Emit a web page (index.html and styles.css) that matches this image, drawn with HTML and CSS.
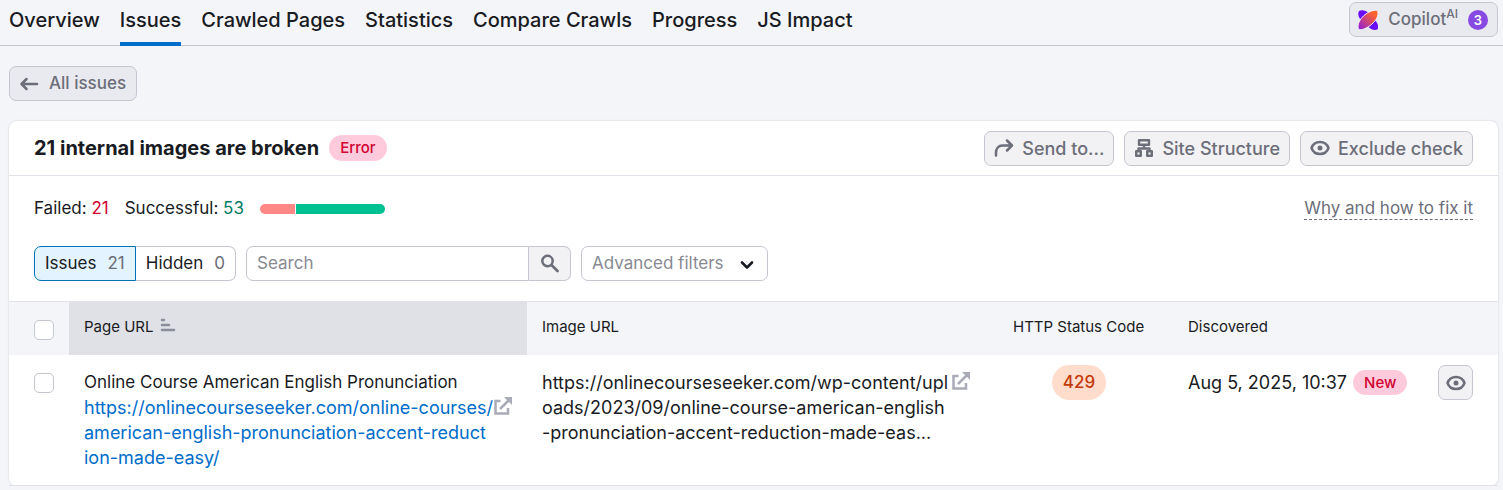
FILE: index.html
```html
<!DOCTYPE html>
<html lang="en">
<head>
<meta charset="utf-8">
<title>Site Audit: Issues</title>
<link rel="stylesheet" href="styles.css">
</head>
<body>
<svg class="sprite" aria-hidden="true">
  <symbol id="eye" viewBox="0 0 20 20">
    <path d="M1.500 10C3 5.800 6.300 4 10 4s7 1.800 8.500 6c-1.500 4.200-4.800 6-8.500 6s-7-1.800-8.500-6Z" fill="none" stroke="currentColor" stroke-width="2.500" stroke-linejoin="round"/>
    <circle cx="10" cy="10" r="2.500" fill="currentColor"/>
  </symbol>
  <symbol id="external" viewBox="0 0 20 20">
    <path d="M7.500 5H2.500v12.500H15v-5.500" fill="none" stroke="currentColor" stroke-width="2.500"/>
    <path d="M7 13 16 4" fill="none" stroke="currentColor" stroke-width="2.500"/>
    <path d="M11 1h8v8l-2.700-2.700-2.600-2.600Z" fill="currentColor"/>
  </symbol>
</svg>
<header class="topbar">
  <nav class="tabs">
    <a class="tab" href="#overview">Overview</a>
    <a class="tab tab-active" href="#issues" aria-current="page">Issues</a>
    <a class="tab" href="#pages">Crawled Pages</a>
    <a class="tab" href="#statistics">Statistics</a>
    <a class="tab" href="#compare">Compare Crawls</a>
    <a class="tab" href="#progress">Progress</a>
    <a class="tab" href="#js">JS Impact</a>
  </nav>
  <button class="btn btn-tinted copilot" type="button">
    <svg class="icon" viewBox="0 0 20 20" aria-hidden="true">
      <defs>
        <linearGradient id="flame" x1="1" y1="0" x2="0" y2="1">
          <stop offset="0.200" stop-color="#ff642d"/>
          <stop offset="1" stop-color="#8b1be0"/>
        </linearGradient>
      </defs>
      <path d="M1 1C4-.5 8 .5 11 3.500l6 6.500c3 3.500 3.800 6.500 2.500 9.500-3 1.200-7 .2-10.500-4L3 10C0 6.500-.3 3.500 1 1Z" fill="#6a0dff"/>
      <path d="M19.500.5c1.300 3.500.3 7.500-4 12S4.500 20.800.5 19.500C-.8 15.500.5 11.500 4.500 7S15.500-.8 19.500.5Z" fill="url(#flame)" stroke="#f0effa" stroke-width="1"/>
    </svg>
    <span class="copilot-name">Copilot<sup>AI</sup></span>
    <span class="counter">3</span>
  </button>
</header>

<main class="page">
  <button class="btn btn-tinted" type="button">
    <svg class="icon" viewBox="0 0 20 20" aria-hidden="true"><path d="M18 10H3M7.500 5 2.500 10l5 5" fill="none" stroke="currentColor" stroke-width="2.500" stroke-linecap="round" stroke-linejoin="round"/></svg>
    All issues
  </button>

  <section class="card">
    <div class="card-head">
      <h1 class="title">21 internal images are broken</h1>
      <span class="badge badge-error">Error</span>
      <div class="actions">
        <button class="btn" type="button">
          <svg class="icon" viewBox="0 0 20 20" aria-hidden="true"><path d="M2 17.500V15c0-4.500 2.500-7.500 6.500-7.500H18M13 2.500l5 5-5 5" fill="none" stroke="currentColor" stroke-width="2.500" stroke-linecap="round" stroke-linejoin="round"/></svg>
          Send to...
        </button>
        <button class="btn" type="button">
          <svg class="icon" viewBox="0 0 20 20" aria-hidden="true"><path d="M5 2.200h10v4.600H5ZM10 7v3.500M4.500 13v-2.500h11V13M2.200 13.200h4.600v4.600H2.200ZM13.200 13.200h4.600v4.600h-4.600Z" fill="none" stroke="currentColor" stroke-width="2.400" stroke-linejoin="round"/></svg>
          Site Structure
        </button>
        <button class="btn" type="button">
          <svg class="icon" aria-hidden="true"><use href="#eye"/></svg>
          Exclude check
        </button>
      </div>
    </div>

    <div class="summary">
      <span>Failed: <span class="failed">21</span></span>
      <span>Successful: <span class="passed">53</span></span>
      <div class="ratio" aria-hidden="true"><i class="ratio-failed"></i><i class="ratio-passed"></i></div>
      <a class="hint" href="#fix">Why and how to fix it</a>
    </div>

    <div class="filters">
      <div class="pills">
        <button class="pill pill-active" type="button">Issues <span class="pill-count">21</span></button>
        <button class="pill" type="button">Hidden <span class="pill-count">0</span></button>
      </div>
      <form class="search">
        <input class="search-input" type="text" placeholder="Search" aria-label="Search">
        <button class="search-btn" type="button" aria-label="Find">
          <svg class="icon" viewBox="0 0 20 20" aria-hidden="true"><circle cx="7.500" cy="7" r="5.200" fill="none" stroke="currentColor" stroke-width="2.500"/><path d="m11.500 11 6 6" stroke="currentColor" stroke-width="2.800" stroke-linecap="round"/></svg>
        </button>
      </form>
      <button class="dropdown" type="button" aria-haspopup="true">
        Advanced filters
        <svg class="icon" viewBox="0 0 20 20" aria-hidden="true"><path d="m5 8.500 5 5 5-5" fill="none" stroke="#191b23" stroke-width="2.600" stroke-linecap="round" stroke-linejoin="round"/></svg>
      </button>
    </div>

    <table class="table">
      <colgroup>
        <col class="col-check"><col class="col-page"><col><col class="col-status"><col class="col-date"><col class="col-action">
      </colgroup>
      <thead>
        <tr>
          <th class="cell-check"><input class="check" type="checkbox" aria-label="Select all"></th>
          <th class="sorted" aria-sort="ascending">Page URL
            <svg class="sort" viewBox="0 0 16 14" aria-hidden="true"><path d="M2 2h2M2 7h7M2 12h12" stroke="currentColor" stroke-width="2.500" stroke-linecap="round"/></svg>
          </th>
          <th>Image URL</th>
          <th>HTTP Status Code</th>
          <th>Discovered</th>
          <th aria-label="Actions"></th>
        </tr>
      </thead>
      <tbody>
        <tr>
          <td class="cell-check"><input class="check" type="checkbox" aria-label="Select row"></td>
          <td>
            <div>Online Course American English Pronunciation</div>
            <div class="url-line">
              <a class="url link" href="#page">https://onlinecourseseeker.com/online-courses/<br>american-english-pronunciation-accent-reduct<br>ion-made-easy/</a>
              <a class="open" href="#open-page" aria-label="Open page"><svg class="external" aria-hidden="true"><use href="#external"/></svg></a>
            </div>
          </td>
          <td>
            <div class="url-line">
              <span class="url">https://onlinecourseseeker.com/wp-content/upl<br>oads/2023/09/online-course-american-english<br>-pronunciation-accent-reduction-made-eas...</span>
              <a class="open" href="#open-image" aria-label="Open image"><svg class="external" aria-hidden="true"><use href="#external"/></svg></a>
            </div>
          </td>
          <td class="cell-status"><span class="code">429</span></td>
          <td><div class="date">Aug 5, 2025, 10:37 <span class="badge badge-new">New</span></div></td>
          <td class="cell-action"><button class="btn btn-icon" type="button" aria-label="Hide issue"><svg class="icon" aria-hidden="true"><use href="#eye"/></svg></button></td>
        </tr>
      </tbody>
    </table>
  </section>
</main>
</body>
</html>
```
FILE: styles.css
```css
* { box-sizing: border-box; }

body {
  margin: 0;
  background: #f4f5f9;
  color: #191b23;
  font: 17px/25px Inter, "Liberation Sans", sans-serif;
  overflow: hidden;
}

button, input { font: inherit; color: inherit; margin: 0; }
a { color: inherit; text-decoration: none; }
.sprite { display: none; }
.icon { width: 20px; height: 20px; flex: none; }

.topbar {
  display: flex;
  justify-content: space-between;
  align-items: flex-start;
  height: 46px;
  padding: 0 5px 0 9px;
  border-bottom: 1px solid #c4c7cf;
}
.tabs { display: flex; gap: 20px; font-size: 20px; font-weight: 500; white-space: nowrap; }
.tab { height: 46px; padding-top: 8px; }
.tab-active { border-bottom: 4px solid #006dca; }

.btn {
  display: inline-flex;
  align-items: center;
  gap: 10px;
  height: 35px;
  padding: 0 10px 0 9px;
  border: 1px solid #c4c7cf;
  border-radius: 7px;
  background: #f2f2f5;
  color: #6c6e79;
  font-weight: 500;
  white-space: nowrap;
}
.btn-tinted { background: #e9eaef; }
.copilot { margin-top: 2px; padding: 0 9px 0 8px; }
.copilot sup { font-size: 12px; line-height: 0; }
.counter {
  width: 20px;
  border-radius: 50%;
  background: #8649e1;
  color: #fff;
  font-size: 13px;
  line-height: 20px;
  font-weight: 600;
  text-align: center;
}

.page { padding: 20px 5px 0 9px; }
.card {
  margin-top: 20px;
  background: #fff;
  border-radius: 8px;
  box-shadow: 0 0 2px rgba(25, 27, 35, 0.2);
}
.card-head {
  display: flex;
  align-items: center;
  gap: 10px;
  height: 55px;
  padding: 0 25px;
  border-bottom: 1px solid #e0e1e9;
}
.title { margin: 0; font-size: 20px; font-weight: 700; }
.actions { display: flex; gap: 10px; margin-left: auto; }
.actions .btn { gap: 8px; padding: 0 9px; font-size: 18px; }

.badge { border-radius: 13px; background: #ffcbdc; color: #d1002f; font-size: 15px; font-weight: 500; }
.badge-error { padding: 0 11px; line-height: 26px; }
.badge-new { padding: 0 11px; }

.summary { display: flex; align-items: center; gap: 16px; padding: 20px 25px 0; }
.failed { color: #d1002f; }
.passed { color: #007c65; }
.ratio { display: flex; gap: 1px; width: 125px; height: 10px; border-radius: 5px; overflow: hidden; }
.ratio-failed { flex: 21; background: #ff8786; }
.ratio-passed { flex: 53; background: #00c192; }
.hint { margin-left: auto; line-height: 21px; color: #6c6e79; border-bottom: 1px dashed #6c6e79; }

.filters { display: flex; gap: 10px; padding: 25px 25px 20px; }
.pills, .search { display: flex; height: 35px; }
.pill {
  display: flex;
  align-items: center;
  gap: 11px;
  padding: 0 10px;
  border: 1px solid #c4c7cf;
  border-left: 0;
  border-radius: 0 7px 7px 0;
  background: #fff;
}
.pill-active { border: 1px solid #0073b5; border-radius: 7px 0 0 7px; background: #e3f3ff; }
.pill-count { color: #6c6e79; }
.search { width: 325px; }
.search-input {
  flex: 1;
  min-width: 0;
  padding: 0 10px;
  border: 1px solid #c4c7cf;
  border-radius: 7px 0 0 7px;
  background: #fff;
}
.search-input::placeholder { color: #878992; opacity: 1; }
.search-btn {
  display: flex;
  align-items: center;
  justify-content: center;
  width: 42px;
  padding: 0;
  border: 1px solid #c4c7cf;
  border-left: 0;
  border-radius: 0 7px 7px 0;
  background: #f2f2f5;
  color: #6c6e79;
}
.dropdown {
  display: flex;
  align-items: center;
  gap: 13px;
  height: 35px;
  padding: 0 10px;
  border: 1px solid #c4c7cf;
  border-radius: 7px;
  background: #fff;
  color: #878992;
}

.table { width: 100%; border-collapse: separate; border-spacing: 0; table-layout: fixed; }
.col-check { width: 60px; }
.col-page { width: 458px; }
.col-status { width: 175px; }
.col-date { width: 250px; }
.col-action { width: 75px; }
.table th {
  height: 54px;
  padding: 0 15px 4px;
  border-top: 1px solid #e0e1e9;
  background: #f4f5f9;
  font-size: 15px;
  font-weight: 400;
  text-align: left;
}
.table .sorted { background: #e0e1e6; }
.sort { width: 16px; height: 14px; margin-left: 2px; color: #8a8e9b; }
.table td { padding: 15px; border-bottom: 1px solid #e0e1e9; vertical-align: top; }
.table .cell-check { padding-left: 25px; padding-right: 0; }
.table th.cell-check { padding-top: 2px; padding-bottom: 0; }
.check {
  display: block;
  appearance: none;
  width: 20px;
  height: 20px;
  border: 1px solid #c4c7cf;
  border-radius: 5px;
  background: #fff;
}
td .check { margin-top: 3px; }
.url-line { display: flex; }
.url { width: 409px; font-size: 18px; white-space: nowrap; }
.link { color: #006dca; }
.open { color: #a9abb6; }
.external { display: block; width: 20px; height: 20px; margin-top: 1px; }
.table .cell-status { padding: 10px 28px 0 15px; text-align: center; }
.code {
  display: inline-block;
  padding: 0 11px;
  border-radius: 18px;
  background: #ffdccc;
  color: #c33909;
  font-weight: 500;
  line-height: 35px;
}
.date { display: flex; gap: 6px; font-size: 18px; white-space: nowrap; }
.table .cell-action { padding: 10px 25px 0 15px; }
.btn-icon { width: 35px; padding: 0; justify-content: center; }
```
